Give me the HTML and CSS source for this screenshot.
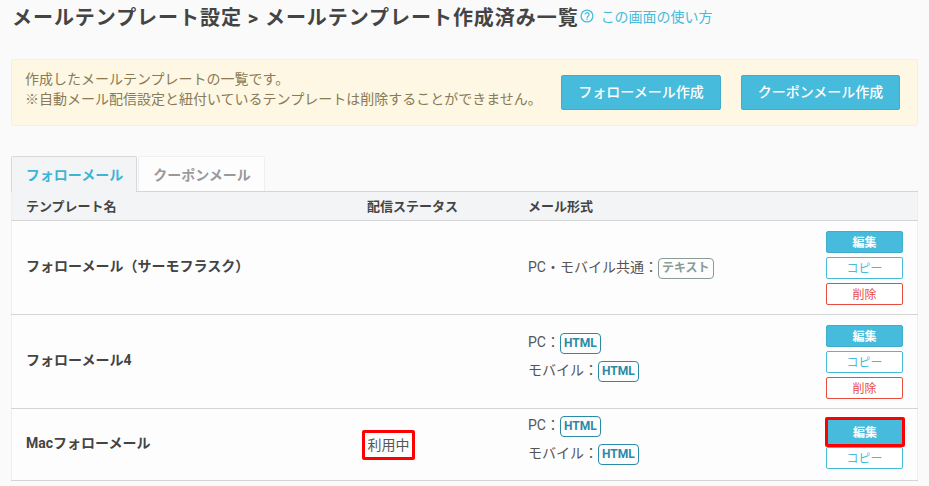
FILE: index.html
```html
<!DOCTYPE html>
<html lang="ja">
<head>
  <meta charset="UTF-8" />
  <title>メールテンプレート作成済み一覧</title>
  <link rel="stylesheet" href="styles.css">
</head>
<body>
  <header class="page-title">
    <h1>メールテンプレート設定 &gt; メールテンプレート作成済み一覧</h1>
    <a href="#" class="help-link">
      <svg class="help-icon" width="14" height="14" viewBox="0 0 14 14" aria-hidden="true">
        <circle cx="7" cy="7" r="5.9" fill="none" stroke="#46bbdb" stroke-width="1.3"/>
        <path d="M5 5.6a2 2 0 1 1 3.1 1.7c-.7.5-1.1.8-1.1 1.6" fill="none" stroke="#46bbdb" stroke-width="1.2"/>
        <circle cx="7" cy="10.3" r=".8" fill="#46bbdb"/>
      </svg>
      <span>この画面の使い方</span>
    </a>
  </header>

  <section class="notice">
    <p>作成したメールテンプレートの一覧です。<br>※自動メール配信設定と紐付いているテンプレートは削除することができません。</p>
    <div class="notice-actions">
      <a href="#" class="btn-create">フォローメール作成</a>
      <a href="#" class="btn-create">クーポンメール作成</a>
    </div>
  </section>

  <nav class="tabs">
    <a href="#" class="tab active">フォローメール</a>
    <a href="#" class="tab">クーポンメール</a>
  </nav>

  <table class="template-table">
    <thead>
      <tr>
        <th class="col-name">テンプレート名</th>
        <th class="col-status">配信ステータス</th>
        <th class="col-format">メール形式</th>
        <th class="col-actions"></th>
      </tr>
    </thead>
    <tbody>
      <tr>
        <td class="name">フォローメール（サーモフラスク）</td>
        <td></td>
        <td class="formats">
          <div class="format">PC・モバイル共通：<span class="badge badge-text">テキスト</span></div>
        </td>
        <td class="action-cell">
          <div class="actions">
            <a href="#" class="btn btn-edit">編集</a>
            <a href="#" class="btn btn-copy">コピー</a>
            <a href="#" class="btn btn-delete">削除</a>
          </div>
        </td>
      </tr>
      <tr>
        <td class="name">フォローメール4</td>
        <td></td>
        <td class="formats">
          <div class="format">PC：<span class="badge">HTML</span></div>
          <div class="format">モバイル：<span class="badge">HTML</span></div>
        </td>
        <td class="action-cell">
          <div class="actions">
            <a href="#" class="btn btn-edit">編集</a>
            <a href="#" class="btn btn-copy">コピー</a>
            <a href="#" class="btn btn-delete">削除</a>
          </div>
        </td>
      </tr>
      <tr>
        <td class="name">Macフォローメール</td>
        <td><span class="status highlight">利用中</span></td>
        <td class="formats">
          <div class="format">PC：<span class="badge">HTML</span></div>
          <div class="format">モバイル：<span class="badge">HTML</span></div>
        </td>
        <td class="action-cell">
          <div class="actions">
            <a href="#" class="btn btn-edit highlight-btn">編集</a>
            <a href="#" class="btn btn-copy">コピー</a>
          </div>
        </td>
      </tr>
    </tbody>
  </table>
</body>
</html>
```

FILE: styles.css
```css
body {
  font-family: Roboto, "Noto Sans CJK JP", sans-serif;
  font-size: 14px;
  color: #555;
  margin: 0;
  padding: 0 11px;
  background-color: #fafafa;
}

a {
  text-decoration: none;
}

.page-title {
  display: flex;
  align-items: center;
  height: 32px;
  padding-left: 1px;
  margin-bottom: 27px;
}

.page-title h1 {
  margin: 0;
  font-size: 20px;
  font-weight: bold;
  letter-spacing: 0.95px;
  color: #444;
  white-space: nowrap;
}

.help-link {
  display: flex;
  align-items: center;
  color: #46bbdb;
  margin-left: 1px;
}

.help-icon {
  margin-right: 7px;
}

.notice {
  display: flex;
  justify-content: space-between;
  height: 67px;
  box-sizing: border-box;
  padding: 9px 17px 0 13px;
  background-color: #fdf7e3;
  border: 1px solid #f8f0d5;
  border-radius: 2px;
  margin-bottom: 30px;
}

.notice p {
  margin: 0;
  line-height: 20px;
  color: #8a7a56;
}

.notice-actions {
  display: flex;
  gap: 20px;
  margin-top: 6px;
}

.btn-create {
  display: block;
  width: 160px;
  height: 35px;
  box-sizing: border-box;
  line-height: 33px;
  text-align: center;
  font-weight: 500;
  color: white;
  background-color: #46bbdb;
  border: 1px solid #3fadcb;
  border-radius: 2px;
}

.btn-create + .btn-create {
  width: 159px;
}

.tabs {
  display: flex;
  align-items: flex-start;
  gap: 1px;
  height: 36px;
  margin-bottom: -1px;
  position: relative;
}

.tab {
  width: 126px;
  height: 35px;
  box-sizing: border-box;
  padding-left: 1px;
  line-height: 36px;
  text-align: center;
  font-weight: bold;
  color: #999;
  background-color: #fdfdfd;
  border: 1px solid #efefef;
  border-bottom: 0;
  border-radius: 2px 2px 0 0;
}

.tab.active {
  height: 36px;
  color: #3db4d6;
  background-color: #f3f4f6;
  border-color: #d9d9d9;
}

.tab + .tab {
  width: 127px;
}

.template-table {
  width: 907px;
  table-layout: fixed;
  border-collapse: collapse;
  background-color: #fdfdfd;
  border-right: 1px solid #efefef;
  border-left: 1px solid #efefef;
}

.template-table th {
  height: 27px;
  padding: 0 0 1px;
  text-align: left;
  font-size: 13px;
  font-weight: bold;
  color: #444;
  background-color: #f3f4f6;
  border-top: 1px solid #d5d5d5;
  border-bottom: 1px solid #d5d5d5;
}

.template-table td {
  padding: 0;
  border-bottom: 1px solid #d5d5d5;
}

.template-table th.col-name {
  width: 341px;
  padding-left: 14px;
}

.col-status {
  width: 161px;
}

.col-format {
  width: 298px;
}

.template-table td.name {
  padding: 0 0 6px 14px;
  font-weight: bold;
  color: #444;
}

.template-table td.formats {
  padding: 2px 0 3px;
}

.format {
  line-height: 28px;
  white-space: nowrap;
}

.format + .format {
  margin-bottom: 10px;
}

.badge {
  display: inline-block;
  height: 21px;
  box-sizing: border-box;
  padding: 0 3px;
  line-height: 19px;
  font-size: 12px;
  font-weight: bold;
  color: #2a8aa8;
  border: 1px solid #2a8aa8;
  border-radius: 4px;
}

.badge-text {
  color: #8a9a96;
  border-color: #8a9a96;
}

.status {
  display: block;
  width: fit-content;
  line-height: 20px;
}

.highlight {
  margin-left: -5px;
  padding: 2px 2.5px;
  border: 3px solid #f00;
  border-radius: 2px;
}

.action-cell {
  vertical-align: top;
}

.actions {
  display: flex;
  flex-direction: column;
  gap: 4px;
  align-items: flex-start;
  padding: 10px 0 9px;
}

.btn {
  display: block;
  width: 77px;
  height: 22px;
  box-sizing: border-box;
  line-height: 22px;
  text-align: center;
  font-size: 12px;
  border-radius: 2px;
  border: 1px solid;
}

.btn-edit {
  font-weight: bold;
  color: white;
  background-color: #46bbdb;
  border-color: #3fadcb;
}

.btn-copy {
  color: #46bbdb;
  background-color: white;
  border-color: #46bbdb;
}

.btn-delete {
  color: #e74c3c;
  background-color: white;
  border-color: #e74c3c;
}

.highlight-btn {
  width: 80px;
  height: 30px;
  margin: -2px 0 -4px -1px;
  line-height: 27px;
  border: 3px solid #f00;
}
```
